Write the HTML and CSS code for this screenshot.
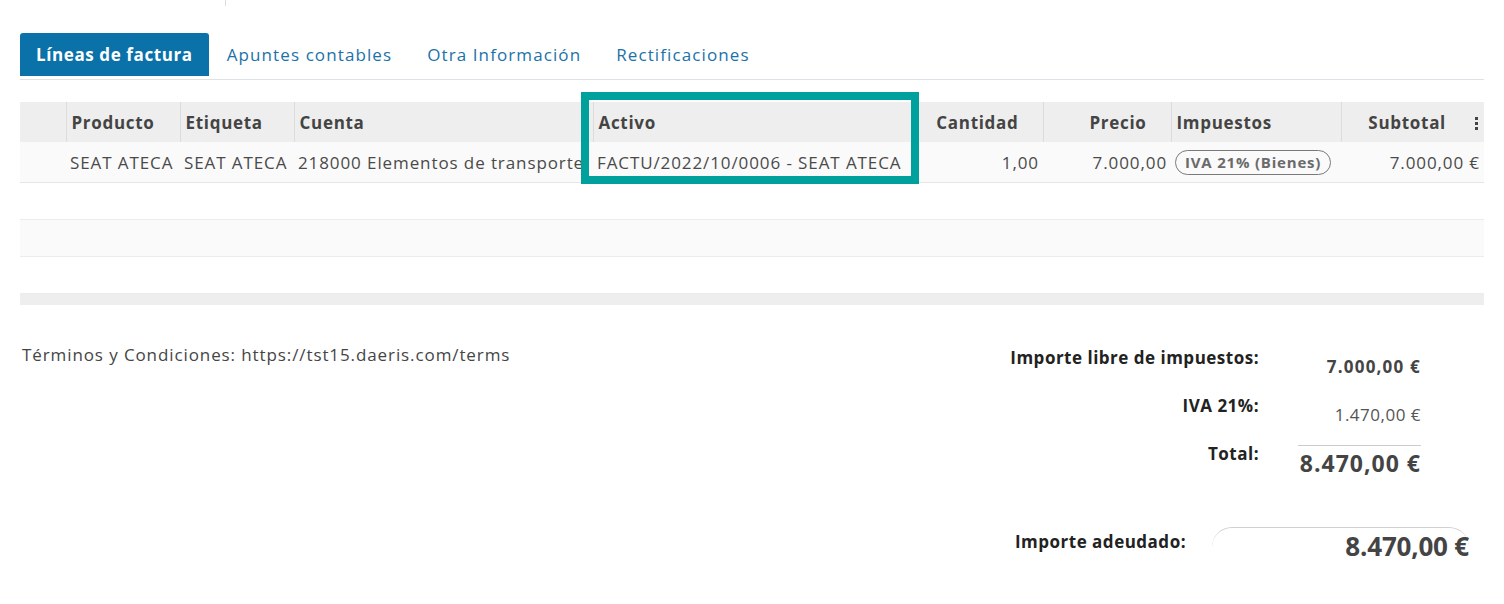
FILE: index.html
```html
<!DOCTYPE html>
<html lang="es">
<head>
<meta charset="utf-8">
<title>Factura</title>
<link rel="stylesheet" href="styles.css">
</head>
<body>
<div class="page">
  <div class="topline"></div>
  <ul class="tabs">
    <li class="tab active">Líneas de factura</li>
    <li class="tab">Apuntes contables</li>
    <li class="tab">Otra Información</li>
    <li class="tab">Rectificaciones</li>
  </ul>

  <div class="table-wrap">
    <table class="lines">
      <colgroup>
        <col class="c-handle"><col class="c-prod"><col class="c-etiq"><col class="c-cuenta"><col class="c-activo"><col class="c-cant"><col class="c-precio"><col class="c-imp"><col class="c-sub">
      </colgroup>
      <thead>
        <tr>
          <th></th>
          <th>Producto</th>
          <th>Etiqueta</th>
          <th>Cuenta</th>
          <th>Activo</th>
          <th class="num">Cantidad</th>
          <th class="num">Precio</th>
          <th>Impuestos</th>
          <th class="num sub">Subtotal<span class="kebab"><i></i><i></i><i></i></span></th>
        </tr>
      </thead>
      <tbody>
        <tr class="data">
          <td></td>
          <td>SEAT ATECA</td>
          <td>SEAT ATECA</td>
          <td>218000 Elementos de transporte</td>
          <td>FACTU/2022/10/0006 - SEAT ATECA</td>
          <td class="num">1,00</td>
          <td class="num">7.000,00</td>
          <td><span class="badge">IVA 21% (Bienes)</span></td>
          <td class="num">7.000,00 €</td>
        </tr>
        <tr class="empty"><td colspan="9"></td></tr>
        <tr class="empty alt"><td colspan="9"></td></tr>
        <tr class="empty"><td colspan="9"></td></tr>
      </tbody>
      <tfoot>
        <tr><td colspan="9"></td></tr>
      </tfoot>
    </table>
    <div class="highlight"></div>
  </div>

  <div class="bottom">
    <p class="terms">Términos y Condiciones: https://tst15.daeris.com/terms</p>
    <div class="totals">
      <div class="tot-grid">
        <div class="lbl">Importe libre de impuestos:</div>
        <div class="val strong">7.000,00 €</div>
        <div class="lbl">IVA 21%:</div>
        <div class="val">1.470,00 €</div>
        <div class="lbl">Total:</div>
        <div class="val total">8.470,00 €</div>
      </div>
      <div class="due">
        <div class="lbl">Importe adeudado:</div>
        <div class="due-val">8.470,00 €</div>
      </div>
    </div>
  </div>
</div>
</body>
</html>
```

FILE: styles.css
```css
html, body {
  margin: 0;
  padding: 0;
  background: #ffffff;
}
body {
  font-family: "Open Sans", "Liberation Sans", sans-serif;
  color: #4a4a4a;
  font-size: 17px;
  letter-spacing: 0.9px;
}
.page {
  padding: 0 20px;
  position: relative;
}
.topline {
  width: 1px;
  height: 6px;
  background: #dcdcdc;
  margin-left: 205px;
}
.tabs {
  list-style: none;
  margin: 27px 0 0;
  padding: 0;
  display: flex;
  border-bottom: 1px solid #dee2e6;
  height: 46px;
}
.tab {
  height: 43px;
  padding: 0 17px 0 18px;
  display: flex;
  align-items: center;
  font-size: 17px;
  letter-spacing: 1.1px;
  color: #1b72a8;
}
.tab.active {
  background: #0b72a9;
  color: #ffffff;
  font-weight: 700;
  letter-spacing: 0.6px;
  border-radius: 3px 3px 0 0;
  padding: 0 16px;
}

.table-wrap {
  position: relative;
  margin-top: 22px;
}
.lines {
  width: 100%;
  border-collapse: collapse;
  table-layout: fixed;
  font-size: 17px;
}
.c-handle { width: 46px; }
.c-prod { width: 114px; }
.c-etiq { width: 114px; }
.c-cuenta { width: 299px; }
.c-activo { width: 320px; }
.c-cant { width: 130px; }
.c-precio { width: 128px; }
.c-imp { width: 170px; }
.c-sub { width: 143px; }

.lines th {
  background: #eeeeee;
  height: 40px;
  padding: 0 5px;
  text-align: left;
  font-weight: 700;
  letter-spacing: 0.7px;
  color: #444;
  border-left: 1px solid #dcdcdc;
  white-space: nowrap;
  overflow: hidden;
}
.lines th:first-child { border-left: none; }
.lines th.num { text-align: right; padding-right: 24px; }
.lines th.sub { padding-right: 0; }
.kebab {
  display: inline-flex;
  flex-direction: column;
  gap: 2px;
  margin-left: 29px;
  margin-right: 6px;
  vertical-align: middle;
}
.kebab i {
  display: block;
  width: 3px;
  height: 3px;
  background: #444;
}
.lines td {
  padding: 0 4px;
  white-space: nowrap;
  overflow: hidden;
  color: #4a4a4a;
}
.lines td.num { text-align: right; }
.lines tr.data td {
  background: #fafafa;
  height: 40px;
  border-bottom: 1px solid #e6e6e6;
}
.lines tr.empty td {
  height: 36px;
  border-bottom: 1px solid #ececec;
  background: #ffffff;
}
.lines tr.empty.alt td { background: #fafafa; }
.lines tfoot td {
  height: 11px;
  padding: 0;
  background: #eeeeee;
}
.badge {
  display: inline-block;
  border: 1px solid #7a7a7a;
  border-radius: 13px;
  padding: 1px 9px 2px;
  font-weight: 700;
  font-size: 15px;
  letter-spacing: 0.8px;
  color: #6a6a6a;
}
.highlight {
  position: absolute;
  left: 561px;
  top: -10px;
  width: 322px;
  height: 76px;
  border: 8px solid #00a09d;
}

.bottom {
  display: flex;
  justify-content: space-between;
  margin-top: 38px;
}
.terms {
  margin: 0 0 0 2px;
  font-size: 17px;
  color: #454545;
}
.totals {
  width: 474px;
  padding-top: 3px;
  display: flex;
  flex-direction: column;
}
.tot-grid {
  display: grid;
  grid-template-columns: 249px 162px;
  row-gap: 16px;
}
.lbl {
  text-align: right;
  font-weight: 700;
  letter-spacing: 0.5px;
  color: #222;
  font-size: 17px;
}
.val {
  text-align: right;
  padding-top: 9px;
  font-size: 17px;
  letter-spacing: 0.5px;
  color: #555;
}
.val.strong { font-weight: 700; color: #444; letter-spacing: 1.2px; }
.val.total {
  border-top: 1px solid #cccccc;
  margin-top: 3px;
  margin-left: 39px;
  font-size: 23px;
  font-weight: 700;
  letter-spacing: 1px;
  padding-top: 1px;
  color: #444;
}
.due {
  display: flex;
  align-items: flex-start;
  margin-top: 48px;
}
.due .lbl {
  width: 176px;
  padding-top: 3px;
}
.due-val {
  margin-left: 26px;
  width: 257px;
  height: 40px;
  border-top: 1px solid #d0d0d0;
  border-radius: 20px 20px 0 0;
  text-align: right;
  font-size: 26px;
  font-weight: 700;
  letter-spacing: -0.2px;
  color: #444;
  padding-top: 0;
  line-height: 36px;
  box-sizing: border-box;
}
```
